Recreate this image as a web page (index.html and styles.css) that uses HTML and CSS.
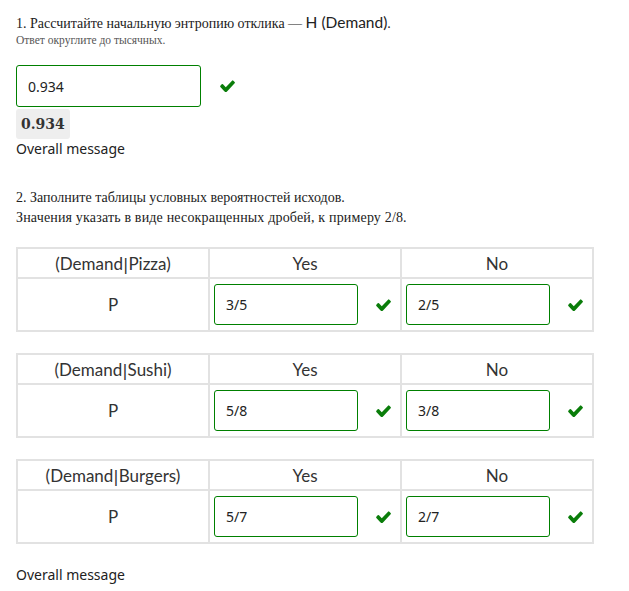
FILE: index.html
```html
<!DOCTYPE html>
<html>
<head>
<meta charset="utf-8">
<link rel="stylesheet" href="styles.css">
</head>
<body>
<svg width="0" height="0" class="defs">
  <defs>
    <symbol id="chk" viewBox="110 300 1570 1190" preserveAspectRatio="none">
      <path d="M1671 566q0 40-28 68l-724 724-136 136q-28 28-68 28t-68-28l-136-136-362-362q-28-28-28-68t28-68l136-136q28-28 68-28t68 28l294 295 656-657q28-28 68-28t68 28l136 136q28 28 28 68z"/>
    </symbol>
  </defs>
</svg>
<div class="page">
  <section class="q1">
    <p class="qtitle">1. Рассчитайте начальную энтропию отклика — <span class="math">H (Demand)</span>.</p>
    <p class="hint">Ответ округлите до тысячных.</p>
    <div class="answer-row">
      <div class="inp wide">0.934</div>
      <svg class="check"><use href="#chk"/></svg>
    </div>
    <div class="preview">0.934</div>
    <div class="overall">Overall message</div>
  </section>

  <section class="q2">
    <p class="qtitle2">2. Заполните таблицы условных вероятностей исходов.<br><span class="line2">Значения указать в виде несокращенных дробей, к примеру 2/8.</span></p>

    <table class="cpt">
      <tr><th>(Demand<span class="bar">|</span>Pizza)</th><th>Yes</th><th>No</th></tr>
      <tr><td class="lbl">P</td>
        <td><div class="cell"><div class="inp">3/5</div><svg class="check"><use href="#chk"/></svg></div></td>
        <td><div class="cell"><div class="inp">2/5</div><svg class="check"><use href="#chk"/></svg></div></td></tr>
    </table>

    <table class="cpt">
      <tr><th>(Demand<span class="bar">|</span>Sushi)</th><th>Yes</th><th>No</th></tr>
      <tr><td class="lbl">P</td>
        <td><div class="cell"><div class="inp">5/8</div><svg class="check"><use href="#chk"/></svg></div></td>
        <td><div class="cell"><div class="inp">3/8</div><svg class="check"><use href="#chk"/></svg></div></td></tr>
    </table>

    <table class="cpt">
      <tr><th>(Demand<span class="bar">|</span>Burgers)</th><th>Yes</th><th>No</th></tr>
      <tr><td class="lbl">P</td>
        <td><div class="cell"><div class="inp">5/7</div><svg class="check"><use href="#chk"/></svg></div></td>
        <td><div class="cell"><div class="inp">2/7</div><svg class="check"><use href="#chk"/></svg></div></td></tr>
    </table>

    <div class="overall overall2">Overall message</div>
  </section>
</div>
</body>
</html>
```

FILE: styles.css
```css
html, body {
  margin: 0;
  padding: 0;
  background: #fff;
}
.defs {
  position: absolute;
}
.page {
  padding: 12px 16px 0 16px;
  color: #222;
}
.qtitle {
  margin: 0;
  font-family: "Liberation Serif", serif;
  font-size: 14px;
  line-height: 20px;
  color: #222;
}
.math {
  font-family: Lato, sans-serif;
  font-size: 15.5px;
}
.hint {
  margin: 0;
  font-family: "Liberation Serif", serif;
  font-size: 11.5px;
  line-height: 13px;
  color: #555;
}
.answer-row {
  display: flex;
  align-items: center;
  margin-top: 18px;
  gap: 19px;
}
.inp {
  box-sizing: border-box;
  border: 1px solid #008000;
  border-radius: 3px;
  background: #fff;
  height: 41px;
  width: 144px;
  padding: 0 11px;
  display: flex;
  align-items: center;
  font-family: "Noto Sans", sans-serif;
  font-size: 14px;
  color: #222;
}
.inp.wide {
  width: 185px;
  height: 42px;
}
.check {
  width: 15px;
  height: 12px;
  fill: #0a7d0a;
  flex: none;
}
.preview {
  display: inline-block;
  margin-top: 2px;
  background: #eeeeee;
  border-radius: 3px;
  padding: 0 5px;
  height: 30px;
  line-height: 30px;
  font-family: "DejaVu Serif", serif;
  font-weight: bold;
  font-size: 14px;
  color: #333;
}
.overall {
  font-family: "Noto Sans", sans-serif;
  font-size: 14px;
  line-height: 20px;
  color: #222;
  margin-top: 0;
}
.q2 {
  margin-top: 29px;
}
.qtitle2 {
  margin: 0 0 19px 0;
  font-family: "Liberation Serif", serif;
  font-size: 14px;
  line-height: 20px;
  color: #222;
}
.line2 {
  letter-spacing: 0.17px;
}
.cpt {
  border-collapse: collapse;
  width: 578px;
  table-layout: fixed;
  margin-bottom: 21px;
}
.cpt th, .cpt td {
  border: 2px solid #e2e2e2;
  padding: 0;
}
.cpt th {
  height: 28px;
  font-family: Lato, sans-serif;
  font-weight: normal;
  font-size: 17px;
  color: #333;
  text-align: center;
}
.bar {
  font-family: "DejaVu Sans", sans-serif;
  font-size: 16px;
}
.cpt td {
  height: 51px;
}
.cpt td.lbl {
  text-align: center;
  font-family: Lato, sans-serif;
  font-size: 17px;
  color: #333;
}
.cell {
  display: flex;
  align-items: center;
  gap: 18px;
  padding: 0 4px;
}
.overall2 {
  margin-top: 2px;
}
```
